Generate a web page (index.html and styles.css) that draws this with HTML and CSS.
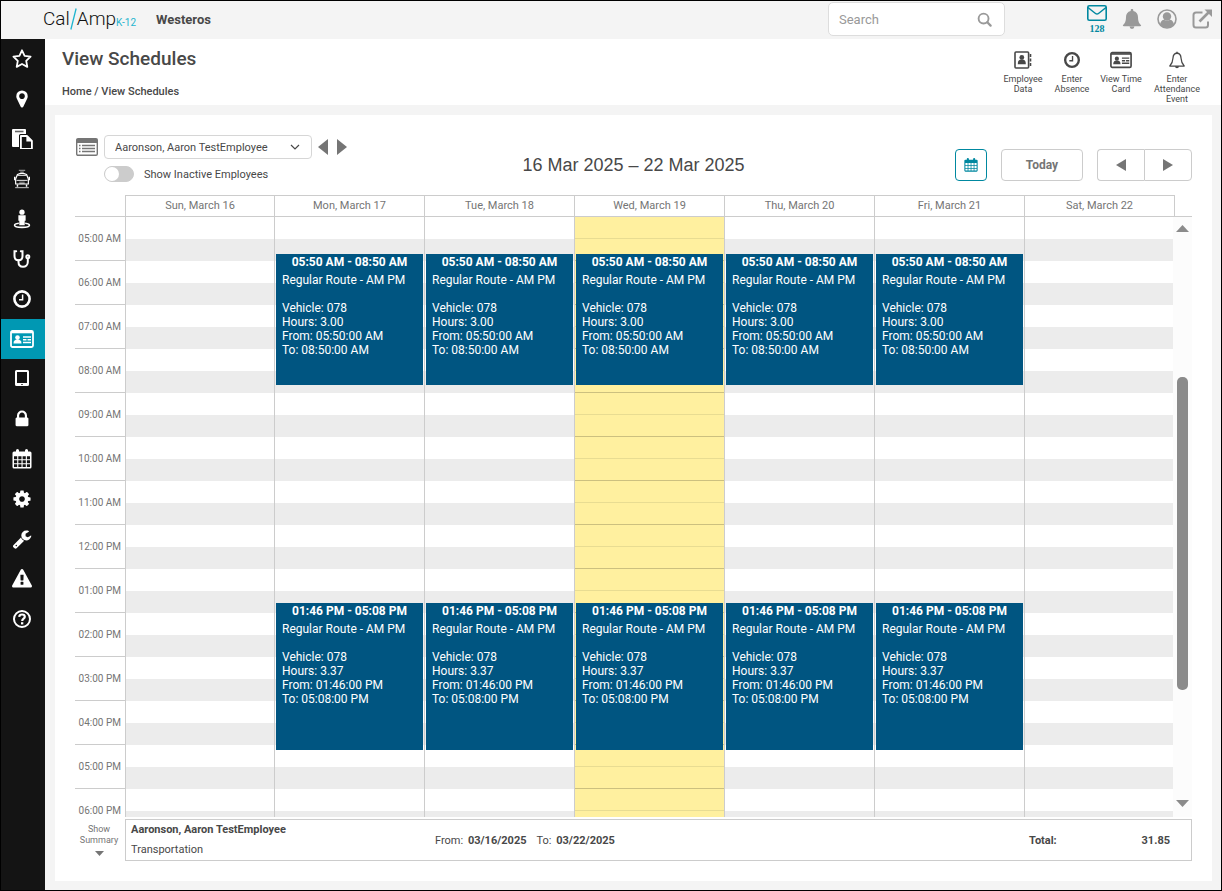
FILE: index.html
```html
<!DOCTYPE html>
<html lang="en">
<head>
    <meta charset="UTF-8">
    <meta name="viewport" content="width=device-width, initial-scale=1.0">
    <title>View Schedules</title>
    <link rel="stylesheet" href="styles.css">
</head>
<body>

    <!-- Icon sprite -->
    <svg class="sprite" aria-hidden="true">
        <symbol id="i-star" viewBox="0 0 20 20"><path d="M10 1.300l2.600 5.600 6 .8-4.400 4.200 1.100 6-5.300-2.900-5.300 2.900 1.100-6-4.400-4.200 6-.8z" fill="none" stroke="currentColor" stroke-width="1.800" stroke-linejoin="round"/></symbol>
        <symbol id="i-marker" viewBox="0 0 1792 1792"><path d="M1152 640q0-106-75-181t-181-75-181 75-75 181 75 181 181 75 181-75 75-181zm256 0q0 109-33 179l-364 774q-16 33-47.500 52t-67.500 19-67.500-19-46.500-52l-365-774q-33-70-33-179 0-212 150-362t362-150 362 150 150 362z"/></symbol>
        <symbol id="i-paste" viewBox="0 0 22 20"><path d="M2 0h12a1 1 0 0 1 1 1v4h-5.500A1.500 1.500 0 0 0 8 6.500V18H2a1 1 0 0 1-1-1V1a1 1 0 0 1 1-1z"/><path d="M4 2.500h8.500" stroke="#666" stroke-width="1.600"/><path d="M9.900 7h6l5 5v8h-11z" fill="#141414" stroke="currentColor" stroke-width="1.800" stroke-linejoin="round"/><path d="M15.400 7v5.500h5.500z"/></symbol>
        <symbol id="i-bus" viewBox="0 0 20 22"><g fill="none" stroke="currentColor"><path d="M6.500 1.500h7M8 3.500h4" stroke-width="1.500" opacity=".5"/><path d="M5 6Q10 3.500 15 6L17 11v5.500H3V11z" stroke-width="1.300"/><path d="M5 7h10M4 12.500h12" stroke-width="1"/><path d="M7 14.500h6M7 16h6" opacity=".6"/><path d="M2 8.500v4M18 8.500v4" stroke-width="1.600"/><path d="M5 17v2.500M15 17v2.500" stroke-width="1.600"/><path d="M2.500 20.500h15" stroke-width="1.200" opacity=".7"/></g></symbol>
        <symbol id="i-person" viewBox="0 0 20 22"><circle cx="10" cy="3.500" r="2.900"/><path d="M6 7h8v6h-1v5H7v-5H6z"/><path d="M6.500 15.600c-3 .4-4.700 1.200-4.700 2.200 0 1.400 3.700 2.400 8.200 2.400s8.200-1 8.200-2.400c0-1-1.700-1.800-4.700-2.200" fill="none" stroke="currentColor" stroke-width="1.700"/></symbol>
        <symbol id="i-steth" viewBox="0 0 20 20"><g fill="none" stroke="currentColor" stroke-width="2" stroke-linecap="round"><path d="M4.200 2.300H2.500V7c0 2.600 1.600 4.300 4 4.300s4-1.700 4-4.300V2.300H8.800"/><path d="M6.500 11.500V13c0 2.800 1.700 4.800 4.500 4.800s4.800-2 4.800-4.800v-3"/><circle cx="15.800" cy="7.700" r="1.500"/></g></symbol>
        <symbol id="i-clock" viewBox="0 0 20 20"><circle cx="10" cy="10" r="7.600" fill="none" stroke="currentColor" stroke-width="2.600"/><path d="M10.600 5.500v5.300H7" fill="none" stroke="currentColor" stroke-width="1.500"/></symbol>
        <symbol id="i-card" viewBox="0 0 24 18"><rect x="1" y="1" width="22" height="16" rx="1.500" fill="none" stroke="currentColor" stroke-width="1.800"/><path d="M1 1.500h22v1.800H1z"/><circle cx="7.500" cy="7.600" r="2.300"/><path d="M3.500 13.500c0-3 1.500-4 4-4s4 1 4 4z"/><path d="M13 7h8M13 9.800h3.500M17.500 9.800H21M13 12.600h8" stroke="currentColor" stroke-width="1.500"/></symbol>
        <symbol id="i-tablet" viewBox="0 0 20 20"><path d="M4.500 1h11A1.500 1.500 0 0 1 17 2.500v13a1.500 1.500 0 0 1-1.500 1.500h-11A1.500 1.500 0 0 1 3 15.500v-13A1.500 1.500 0 0 1 4.500 1zM5 3v11h10V3zm4.300 12v1h1.400v-1z" fill-rule="evenodd"/></symbol>
        <symbol id="i-lock" viewBox="0 0 1792 1792"><path d="M640 768h512v-192q0-106-75-181t-181-75-181 75-75 181v192zm832 96v576q0 40-28 68t-68 28h-960q-40 0-68-28t-28-68v-576q0-40 28-68t68-28h32v-192q0-184 132-316t316-132 316 132 132 316v192h32q40 0 68 28t28 68z"/></symbol>
        <symbol id="i-calendar" viewBox="0 0 20 20"><path d="M2 2.500h16a1.500 1.500 0 0 1 1.500 1.500v14a1.500 1.500 0 0 1-1.500 1.500H2A1.500 1.500 0 0 1 .5 18V4A1.500 1.500 0 0 1 2 2.500zM2 7.300v2.900h3.200V7.300zm4.300 0v2.900h3.200V7.300zm4.300 0v2.900h3.200V7.300zm4.300 0v2.900H18V7.300zM2 11.300v2.900h3.200v-2.900zm4.300 0v2.900h3.200v-2.900zm4.300 0v2.900h3.200v-2.900zm4.300 0v2.900H18v-2.900zM2 15.300v2.700h3.200v-2.700zm4.300 0v2.700h3.200v-2.700zm4.300 0v2.700h3.200v-2.700zm4.300 0v2.700H18v-2.700z" fill-rule="evenodd"/><path d="M5.500 1.500v3M14.500 1.500v3" stroke="currentColor" stroke-width="3" stroke-linecap="round"/></symbol>
        <symbol id="i-cog" viewBox="0 0 1792 1792"><path d="M1152 896q0-106-75-181t-181-75-181 75-75 181 75 181 181 75 181-75 75-181zm512-109v222q0 12-8 23t-20 13l-185 28q-19 54-39 91 35 50 107 138 10 12 10 25t-9 23q-27 37-99 108t-94 71q-12 0-26-9l-138-108q-44 23-91 38-16 136-29 186-7 28-36 28h-222q-14 0-24.500-8.500t-11.500-21.500l-28-184q-49-16-90-37l-141 107q-10 9-25 9-14 0-25-11-126-114-165-168-7-10-7-23 0-12 8-23 15-21 51-66.500t54-70.500q-27-50-41-99l-183-27q-13-2-21-12.500t-8-23.500v-222q0-12 8-23t19-13l186-28q14-46 39-92-40-57-107-138-10-12-10-24 0-10 9-23 26-36 98.500-107.500t94.500-71.500q13 0 26 10l138 107q44-23 91-38 16-136 29-186 7-28 36-28h222q14 0 24.500 8.500t11.500 21.500l28 184q49 16 90 37l142-107q9-9 24-9 13 0 25 10 129 119 165 170 7 8 7 22 0 12-8 23-15 21-51 66.500t-54 70.500q26 50 41 98l183 28q13 2 21 12.500t8 23.500z"/></symbol>
        <symbol id="i-wrench" viewBox="0 0 1792 1792"><path d="M448 1472q0-26-19-45t-45-19-45 19-19 45 19 45 45 19 45-19 19-45zm644-420l-682 682q-37 37-90 37-52 0-91-37l-106-108q-38-36-38-90 0-53 38-91l681-681q39 98 114.500 173.500t173.500 114.500zm634-435q0 39-23 106-47 134-164.500 217.500t-258.500 83.500q-185 0-316.500-131.500t-131.500-316.500 131.500-316.500 316.500-131.500q58 0 121.500 16.500t107.500 46.500q16 11 16 28t-16 28l-293 169v224l193 107q5-3 79-48.500t135.500-81 70.500-35.500q15 0 23.500 10t8.500 25z"/></symbol>
        <symbol id="i-warning" viewBox="0 0 1792 1792"><path d="M1024 1375v-190q0-14-9.500-23.500t-22.500-9.500h-192q-13 0-22.500 9.500t-9.500 23.500v190q0 14 9.500 23.500t22.500 9.500h192q13 0 22.500-9.500t9.500-23.500zm-2-374l18-459q0-12-10-19-13-11-24-11h-220q-11 0-24 11-10 7-10 21l17 457q0 10 10 16.500t24 6.500h185q14 0 23.500-6.500t10.500-16.500zm-14-934l768 1408q35 63-2 126-17 29-46.500 46t-63.500 17h-1536q-34 0-63.500-17t-46.500-46q-37-63-2-126l768-1408q17-31 47-49t65-18 65 18 47 49z"/></symbol>
        <symbol id="i-help" viewBox="0 0 20 20"><circle cx="10" cy="10" r="8" fill="none" stroke="currentColor" stroke-width="2"/><path d="M7.200 7.800C7.400 6.200 8.500 5.500 10 5.500c1.700 0 2.800 1 2.800 2.300 0 2-2.600 1.900-2.600 4.200" fill="none" stroke="currentColor" stroke-width="2.200"/><path d="M9 13.200h2.300v2.200H9z"/></symbol>
        <symbol id="i-search" viewBox="0 0 16 16"><circle cx="7" cy="7" r="5.300" fill="none" stroke="currentColor" stroke-width="2"/><path d="M11 11l3.500 3.500" stroke="currentColor" stroke-width="2.400" stroke-linecap="round"/></symbol>
        <symbol id="i-mail" viewBox="0 0 20 16"><rect x=".8" y=".8" width="18.400" height="14.400" rx="1.500" fill="none" stroke="currentColor" stroke-width="1.600"/><path d="M1 2.500c3 2.500 6 4.800 7.500 6 1 .8 2 .8 3 0 1.500-1.200 4.500-3.500 7.500-6" fill="none" stroke="currentColor" stroke-width="1.500"/></symbol>
        <symbol id="i-bell" viewBox="0 0 20 20"><path d="M10 0c.8 0 1.300.5 1.300 1.300v.6C14.500 2.500 16 5 16 8c0 4.500 1.200 6.500 3 8 .3.700 0 1.200-.8 1.200H1.800c-.8 0-1.100-.5-.8-1.200 1.800-1.500 3-3.500 3-8 0-3 1.500-5.500 4.700-6.100v-.6C8.700.5 9.200 0 10 0zM7.600 17.500h4.800a2.400 2.400 0 0 1-4.800 0z"/></symbol>
        <symbol id="i-bell-o" viewBox="0 0 20 20"><path d="M10 2.500c-2.800 0-4.300 2.200-4.500 5.500-.2 4-1.300 6.300-3.500 8.700h16c-2.200-2.400-3.300-4.700-3.500-8.700-.2-3.300-1.700-5.500-4.500-5.500z" fill="none" stroke="currentColor" stroke-width="1.400" stroke-linejoin="round"/><path d="M9.200.8h1.600v2H9.200zM7.800 17h4.400a2.200 2.200 0 0 1-4.400 0z"/></symbol>
        <symbol id="i-user" viewBox="0 0 20 20"><circle cx="10" cy="10" r="9" fill="none" stroke="currentColor" stroke-width="1.600"/><circle cx="10" cy="7.500" r="4.200"/><path d="M3 15.500c.6-3 2.200-4.600 4-4.700 1.800 1.400 4.200 1.400 6 0 1.800.1 3.400 1.700 4 4.700-1.700 2-4.300 3.300-7 3.300s-5.300-1.300-7-3.300z"/></symbol>
        <symbol id="i-external" viewBox="0 0 20 20"><path d="M10.500 3.500H4A2.500 2.500 0 0 0 1.500 6v10A2.500 2.500 0 0 0 4 18.500h9.500A2.500 2.500 0 0 0 16 16v-3.500" fill="none" stroke="currentColor" stroke-width="2"/><path d="M7.500 12.500l9-9" stroke="currentColor" stroke-width="2.600"/><path d="M12.500.5H20v7.500z"/></symbol>
        <symbol id="i-book" viewBox="0 0 18 18"><rect x="1" y="1" width="13.600" height="16" rx="1" fill="none" stroke="currentColor" stroke-width="1.600"/><circle cx="7.800" cy="6.400" r="2.400"/><path d="M3.800 13.300c0-4 1.500-4.800 4-4.800s4 .8 4 4.800z"/><path d="M16.500 3v3M16.500 7.500v3M16.500 12v3" stroke="currentColor" stroke-width="1.600"/></symbol>
        <symbol id="i-list" viewBox="0 0 22 18"><rect x=".7" y=".7" width="20.600" height="16.600" rx="1.300" fill="none" stroke="currentColor" stroke-width="1.400"/><path d="M1 1h20v4H1z"/><path d="M6 7.500h13M6 10.500h13M6 13.500h13M3 7.500h1.500M3 10.500h1.500M3 13.500h1.500" stroke="currentColor" stroke-width="1.600"/></symbol>
        <symbol id="i-left" viewBox="0 0 10 16" preserveAspectRatio="none"><path d="M10 0v16L0 8z"/></symbol>
        <symbol id="i-right" viewBox="0 0 10 16" preserveAspectRatio="none"><path d="M0 0v16l10-8z"/></symbol>
        <symbol id="i-up" viewBox="0 0 14 7" preserveAspectRatio="none"><path d="M0 7h14L7 0z"/></symbol>
        <symbol id="i-down" viewBox="0 0 14 7" preserveAspectRatio="none"><path d="M0 0h14L7 7z"/></symbol>
        <symbol id="i-chevron" viewBox="0 0 10 6"><path d="M1 1l4 4 4-4" fill="none" stroke="currentColor" stroke-width="1.200"/></symbol>
    </svg>

    <header class="topbar">
        <a class="logo" href="#">
            <span>Cal</span>
            <svg class="slash" viewBox="0 0 8 24" aria-hidden="true"><path d="M7 0L1 24" stroke="#1fb5cf" stroke-width="1.500"/></svg>
            <span>Amp</span>
            <span class="logo-k12">K-12</span>
        </a>
        <span class="district">Westeros</span>
        <form class="search">
            <input type="search" placeholder="Search" aria-label="Search">
            <button type="button" aria-label="Run search"><svg><use href="#i-search"/></svg></button>
        </form>
        <nav class="user-links" aria-label="Account">
            <a class="messages" href="#" aria-label="Messages"><svg><use href="#i-mail"/></svg><span>128</span></a>
            <a href="#" aria-label="Alerts"><svg><use href="#i-bell"/></svg></a>
            <a href="#" aria-label="Profile"><svg><use href="#i-user"/></svg></a>
            <a href="#" aria-label="Open in new window"><svg><use href="#i-external"/></svg></a>
        </nav>
    </header>

    <div class="layout">
        <nav class="sidebar" aria-label="Main">
            <a href="#" aria-label="Favorites"><svg><use href="#i-star"/></svg></a>
            <a href="#" aria-label="Map"><svg><use href="#i-marker"/></svg></a>
            <a href="#" aria-label="Documents"><svg class="wide"><use href="#i-paste"/></svg></a>
            <a href="#" aria-label="Vehicles"><svg><use href="#i-bus"/></svg></a>
            <a href="#" aria-label="Students"><svg><use href="#i-person"/></svg></a>
            <a href="#" aria-label="Diagnostics"><svg><use href="#i-steth"/></svg></a>
            <a href="#" aria-label="Time"><svg><use href="#i-clock"/></svg></a>
            <a href="#" aria-label="Employees" class="active"><svg class="wide"><use href="#i-card"/></svg></a>
            <a href="#" aria-label="Tablets"><svg><use href="#i-tablet"/></svg></a>
            <a href="#" aria-label="Security"><svg><use href="#i-lock"/></svg></a>
            <a href="#" aria-label="Calendar"><svg><use href="#i-calendar"/></svg></a>
            <a href="#" aria-label="Settings"><svg><use href="#i-cog"/></svg></a>
            <a href="#" aria-label="Maintenance"><svg><use href="#i-wrench"/></svg></a>
            <a href="#" aria-label="Warnings"><svg><use href="#i-warning"/></svg></a>
            <a href="#" aria-label="Help"><svg><use href="#i-help"/></svg></a>
        </nav>

        <div class="page">
            <div class="page-header">
                <div>
                    <h1>View Schedules</h1>
                    <div class="breadcrumb"><a href="#">Home</a> / <a href="#">View Schedules</a></div>
                </div>
                <div class="actions">
                    <a href="#"><svg><use href="#i-book"/></svg>Employee Data</a>
                    <a href="#"><svg><use href="#i-clock"/></svg>Enter Absence</a>
                    <a href="#"><svg class="wide"><use href="#i-card"/></svg>View Time Card</a>
                    <a href="#"><svg><use href="#i-bell-o"/></svg>Enter Attendance Event</a>
                </div>
            </div>

            <main class="card">
                <div class="toolbar">
                    <div class="filters">
                        <button type="button" class="list-btn" aria-label="Employee list"><svg><use href="#i-list"/></svg></button>
                        <div class="select-wrap">
                            <select aria-label="Employee">
                                <option>Aaronson, Aaron TestEmployee</option>
                            </select>
                            <svg><use href="#i-chevron"/></svg>
                        </div>
                        <div class="stepper">
                            <button type="button" aria-label="Previous employee"><svg><use href="#i-left"/></svg></button>
                            <button type="button" aria-label="Next employee"><svg><use href="#i-right"/></svg></button>
                        </div>
                        <label class="toggle"><input type="checkbox">Show Inactive Employees</label>
                    </div>
                    <h2>16 Mar 2025 – 22 Mar 2025</h2>
                    <div class="range-nav">
                        <button type="button" class="btn btn-cal" aria-label="Pick a date"><svg><use href="#i-calendar"/></svg></button>
                        <button type="button" class="btn btn-today">Today</button>
                        <div class="btn-group">
                            <button type="button" class="btn" aria-label="Previous week"><svg><use href="#i-left"/></svg></button>
                            <button type="button" class="btn" aria-label="Next week"><svg><use href="#i-right"/></svg></button>
                        </div>
                    </div>
                </div>

                <div class="cal-head">
                    <div class="corner"></div>
                    <div class="day-name">Sun, March 16</div>
                    <div class="day-name">Mon, March 17</div>
                    <div class="day-name">Tue, March 18</div>
                    <div class="day-name">Wed, March 19</div>
                    <div class="day-name">Thu, March 20</div>
                    <div class="day-name">Fri, March 21</div>
                    <div class="day-name">Sat, March 22</div>
                </div>

                <div class="cal-body">
                    <div class="hours">
                        <div>05:00 AM</div>
                        <div>06:00 AM</div>
                        <div>07:00 AM</div>
                        <div>08:00 AM</div>
                        <div>09:00 AM</div>
                        <div>10:00 AM</div>
                        <div>11:00 AM</div>
                        <div>12:00 PM</div>
                        <div>01:00 PM</div>
                        <div>02:00 PM</div>
                        <div>03:00 PM</div>
                        <div>04:00 PM</div>
                        <div>05:00 PM</div>
                        <div>06:00 PM</div>
                    </div>
                    <div class="day"></div>
                    <div class="day">
                        <div class="event am">
                            <h3>05:50 AM - 08:50 AM</h3>
                            <p>Regular Route - AM PM</p>
                            <p>Vehicle: 078<br>Hours: 3.00<br>From: 05:50:00 AM<br>To: 08:50:00 AM</p>
                        </div>
                        <div class="event pm">
                            <h3>01:46 PM - 05:08 PM</h3>
                            <p>Regular Route - AM PM</p>
                            <p>Vehicle: 078<br>Hours: 3.37<br>From: 01:46:00 PM<br>To: 05:08:00 PM</p>
                        </div>
                    </div>
                    <div class="day">
                        <div class="event am">
                            <h3>05:50 AM - 08:50 AM</h3>
                            <p>Regular Route - AM PM</p>
                            <p>Vehicle: 078<br>Hours: 3.00<br>From: 05:50:00 AM<br>To: 08:50:00 AM</p>
                        </div>
                        <div class="event pm">
                            <h3>01:46 PM - 05:08 PM</h3>
                            <p>Regular Route - AM PM</p>
                            <p>Vehicle: 078<br>Hours: 3.37<br>From: 01:46:00 PM<br>To: 05:08:00 PM</p>
                        </div>
                    </div>
                    <div class="day today">
                        <div class="event am">
                            <h3>05:50 AM - 08:50 AM</h3>
                            <p>Regular Route - AM PM</p>
                            <p>Vehicle: 078<br>Hours: 3.00<br>From: 05:50:00 AM<br>To: 08:50:00 AM</p>
                        </div>
                        <div class="event pm">
                            <h3>01:46 PM - 05:08 PM</h3>
                            <p>Regular Route - AM PM</p>
                            <p>Vehicle: 078<br>Hours: 3.37<br>From: 01:46:00 PM<br>To: 05:08:00 PM</p>
                        </div>
                    </div>
                    <div class="day">
                        <div class="event am">
                            <h3>05:50 AM - 08:50 AM</h3>
                            <p>Regular Route - AM PM</p>
                            <p>Vehicle: 078<br>Hours: 3.00<br>From: 05:50:00 AM<br>To: 08:50:00 AM</p>
                        </div>
                        <div class="event pm">
                            <h3>01:46 PM - 05:08 PM</h3>
                            <p>Regular Route - AM PM</p>
                            <p>Vehicle: 078<br>Hours: 3.37<br>From: 01:46:00 PM<br>To: 05:08:00 PM</p>
                        </div>
                    </div>
                    <div class="day">
                        <div class="event am">
                            <h3>05:50 AM - 08:50 AM</h3>
                            <p>Regular Route - AM PM</p>
                            <p>Vehicle: 078<br>Hours: 3.00<br>From: 05:50:00 AM<br>To: 08:50:00 AM</p>
                        </div>
                        <div class="event pm">
                            <h3>01:46 PM - 05:08 PM</h3>
                            <p>Regular Route - AM PM</p>
                            <p>Vehicle: 078<br>Hours: 3.37<br>From: 01:46:00 PM<br>To: 05:08:00 PM</p>
                        </div>
                    </div>
                    <div class="day"></div>
                    <div class="scrollbar">
                        <button type="button" aria-label="Scroll up"><svg><use href="#i-up"/></svg></button>
                        <div class="track"><div class="thumb"></div></div>
                        <button type="button" aria-label="Scroll down"><svg><use href="#i-down"/></svg></button>
                    </div>
                </div>

                <div class="summary">
                    <button type="button" class="show-summary">Show Summary<svg><use href="#i-down"/></svg></button>
                    <div class="summary-box">
                        <div class="employee"><strong>Aaronson, Aaron TestEmployee</strong><span>Transportation</span></div>
                        <div class="dates"><span>From: <strong>03/16/2025</strong></span><span>To: <strong>03/22/2025</strong></span></div>
                        <div class="total"><strong>Total:</strong><strong>31.85</strong></div>
                    </div>
                </div>
            </main>
        </div>
    </div>

</body>
</html>
```
FILE: styles.css
```css
* {
    box-sizing: border-box;
}
body {
    margin: 0;
    height: 100vh;
    border: 1px solid #000;
    display: flex;
    flex-direction: column;
    font-family: Roboto, Arial, sans-serif;
    font-size: 11px;
    color: #484848;
    background: #f4f4f4;
    overflow: hidden;
}
h1, h2, h3, p {
    margin: 0;
}
a {
    color: inherit;
    text-decoration: none;
}
strong {
    font-weight: 700;
}
svg {
    display: block;
    flex: none;
    fill: currentColor;
}
button {
    display: flex;
    align-items: center;
    justify-content: center;
    padding: 0;
    border: none;
    background: none;
    font: inherit;
    color: #757575;
    cursor: pointer;
}
.sprite {
    display: none;
}

/* Top bar */
.topbar {
    flex: none;
    display: flex;
    align-items: center;
    height: 38px;
    padding: 0 9px 2px 42px;
}
.logo {
    display: flex;
    align-items: center;
    font-size: 19px;
    line-height: 24px;
    font-weight: 300;
    color: #111;
}
.slash {
    width: 7px;
    height: 24px;
}
.logo-k12 {
    align-self: flex-end;
    line-height: 16px;
    font-size: 10px;
    font-weight: 400;
    color: #1fb5cf;
}
.district {
    margin-left: 20px;
    font-size: 13px;
    font-weight: 700;
}
.search {
    display: flex;
    align-items: center;
    width: 177px;
    height: 34px;
    margin: 0 82px 0 auto;
    padding: 0 12px 0 10px;
    border: 1px solid #ddd;
    border-radius: 5px;
    background: #fff;
}
.search input {
    flex: 1;
    min-width: 0;
    padding: 0;
    border: none;
    outline: none;
    background: none;
    font: 13px Roboto, Arial, sans-serif;
    color: #484848;
}
.search input::placeholder {
    color: #999;
}
.search svg {
    width: 15px;
    height: 15px;
    color: #999;
}
.user-links {
    display: flex;
    align-items: center;
    gap: 15px;
    color: #999;
}
.user-links svg {
    width: 20px;
    height: 20px;
}
.user-links .messages {
    font: bold 10px/11px "Liberation Serif", serif;
    text-align: center;
    color: #0088a0;
}
.user-links .messages svg {
    height: 16px;
    margin-bottom: 2px;
}

/* Sidebar */
.layout {
    flex: 1;
    min-height: 0;
    display: flex;
}
.sidebar {
    flex: none;
    width: 44px;
    background: #141414;
    color: #fff;
}
.sidebar a {
    display: flex;
    align-items: center;
    justify-content: center;
    height: 40px;
    padding-right: 2px;
}
.sidebar a.active {
    background: #0098b3;
}
.sidebar svg {
    width: 20px;
    height: 20px;
}
.sidebar svg.wide {
    width: 24px;
}

/* Page header */
.page {
    flex: 1;
    min-width: 0;
    display: flex;
    flex-direction: column;
}
.page-header {
    flex: none;
    display: flex;
    justify-content: space-between;
    height: 66px;
    padding: 8px 15px 0 17px;
    background: #fff;
}
.page-header h1 {
    font-size: 19px;
    line-height: 24px;
    font-weight: 500;
}
.breadcrumb {
    margin-top: 13px;
    line-height: 16px;
    font-weight: 500;
}
.actions {
    display: flex;
    gap: 5px;
    padding-top: 4px;
}
.actions a {
    display: flex;
    flex-direction: column;
    align-items: center;
    width: 44px;
    font-size: 9px;
    line-height: 10px;
    text-align: center;
}
.actions a:last-child {
    width: 58px;
    padding: 0 5px;
}
.actions svg {
    width: 18px;
    height: 18px;
    margin-bottom: 5px;
}
.actions svg.wide {
    width: 22px;
}

/* Schedule card */
.card {
    flex: 1;
    min-height: 0;
    display: flex;
    flex-direction: column;
    margin: 10px 9px 9px 10px;
    padding: 20px;
    background: #fff;
}
.toolbar {
    flex: none;
    display: grid;
    grid-template-columns: 1fr auto 1fr;
    align-items: center;
    height: 60px;
}
.toolbar h2 {
    font-family: "Liberation Sans", Arial, sans-serif;
    font-size: 18px;
    line-height: 20px;
    font-weight: 400;
}
.filters {
    align-self: start;
    display: grid;
    grid-template-columns: 23px 208px auto;
    gap: 7px 6px;
    justify-content: start;
    align-items: center;
}
.list-btn {
    justify-content: flex-end;
}
.list-btn svg {
    width: 22px;
    height: 18px;
}
.select-wrap {
    display: grid;
    align-items: center;
}
.select-wrap select,
.select-wrap svg {
    grid-area: 1 / 1;
}
.select-wrap select {
    height: 24px;
    padding: 0 10px;
    border: 1px solid #d6d6d6;
    border-radius: 4px;
    background: #fff;
    font: 11px Roboto, Arial, sans-serif;
    color: #484848;
    appearance: none;
}
.select-wrap svg {
    justify-self: end;
    width: 10px;
    height: 6px;
    margin-right: 12px;
    pointer-events: none;
}
.stepper {
    display: flex;
    gap: 9px;
}
.stepper svg {
    width: 10px;
    height: 16px;
}
.toggle {
    grid-column: 2;
    display: flex;
    align-items: center;
    gap: 10px;
}
.toggle input {
    width: 30px;
    height: 16px;
    margin: 0;
    border: 1px solid #ccc;
    border-radius: 8px;
    background: #ccc;
    appearance: none;
}
.toggle input::before {
    content: "";
    display: block;
    width: 14px;
    height: 14px;
    border-radius: 50%;
    background: #fff;
}
.toggle input:checked::before {
    margin-left: 14px;
}
.range-nav {
    display: flex;
    justify-content: flex-end;
    gap: 14px;
}
.btn {
    height: 32px;
    border: 1px solid #ccc;
    border-radius: 4px;
    background: #fff;
    font-weight: 700;
}
.btn-cal {
    width: 32px;
    border-color: #0088a0;
    color: #0088a0;
}
.btn-cal svg {
    width: 14px;
    height: 14px;
}
.btn-today {
    width: 82px;
    font-size: 12px;
}
.btn-group {
    display: flex;
}
.btn-group .btn {
    width: 48px;
}
.btn-group .btn:first-child {
    width: 47px;
    border-right: none;
    border-radius: 4px 0 0 4px;
}
.btn-group .btn:last-child {
    border-radius: 0 4px 4px 0;
}
.btn-group svg {
    width: 10px;
    height: 12px;
}

/* Calendar */
.cal-head,
.cal-body {
    display: grid;
    grid-template-columns: 50px repeat(7, 1fr) 17px;
}
.cal-head {
    flex: none;
    height: 22px;
    border-bottom: 1px solid #ccc;
    line-height: 20px;
    text-align: center;
    color: #757575;
}
.day-name {
    border-top: 1px solid #ccc;
    border-right: 1px solid #ccc;
}
.corner + .day-name {
    border-left: 1px solid #ccc;
}
.cal-body {
    flex: 1;
    min-height: 0;
    grid-template-rows: 100%;
    overflow: hidden;
}
.hours div {
    height: 44px;
    border-bottom: 1px solid #ccc;
    line-height: 44px;
    padding-right: 4px;
    text-align: right;
    font-size: 10px;
    color: #757575;
}
.day {
    position: relative;
    border-right: 1px solid #ccc;
    background: repeating-linear-gradient(#fff 0 22px, #ececec 22px 44px);
}
.hours + .day {
    border-left: 1px solid #ccc;
}
.day.today {
    background: repeating-linear-gradient(#fff09f 0 21px, #e8dc92 21px 22px, #fff09f 22px 43px, #ccc07f 43px 44px);
}
/* Events sit over the day's hour stripes */
.event {
    position: absolute;
    left: 1px;
    right: 1px;
    padding: 0 6px;
    background: #005581;
    color: #fff;
    font-size: 12px;
    line-height: 14px;
}
.event.am {
    top: 37px;
    height: 131px;
}
.event.pm {
    top: 386px;
    height: 147px;
}
.event h3 {
    font-size: 12px;
    line-height: 16px;
    font-weight: 700;
    text-align: center;
}
.event p {
    margin-bottom: 14px;
}
.event h3 + p {
    margin-top: 3px;
}
.scrollbar {
    position: relative;
    display: flex;
    flex-direction: column;
    margin-left: -2px;
    background: #fcfcfc;
}
.scrollbar button {
    height: 20px;
    color: #8b8b8b;
}
.scrollbar button:first-child {
    padding-top: 3px;
}
.scrollbar button:last-child {
    padding-bottom: 7px;
}
.scrollbar svg {
    width: 13px;
    height: 7px;
}
.track {
    flex: 1;
    display: grid;
    grid-template-rows: 140fr 313fr 107fr;
    justify-content: center;
}
.thumb {
    grid-row: 2;
    width: 11px;
    border-radius: 5px;
    background: #8b8b8b;
}

/* Summary */
.summary {
    flex: none;
    display: grid;
    grid-template-columns: 50px 1fr;
    height: 42px;
    margin-top: 2px;
}
.show-summary {
    flex-direction: column;
    justify-content: flex-start;
    padding: 5px 2px 0 0;
    font-size: 9px;
    line-height: 11px;
}
.show-summary svg {
    width: 9px;
    height: 5px;
    margin-top: 5px;
}
.summary-box {
    display: grid;
    grid-template-columns: 304fr 594fr 141fr;
    align-items: center;
    padding: 0 21px 0 5px;
    border: 1px solid #ccc;
}
.employee {
    display: flex;
    flex-direction: column;
    line-height: 20px;
}
.dates {
    display: flex;
    gap: 10px;
}
.dates strong {
    margin-left: 2px;
}
.total {
    display: flex;
    justify-content: space-between;
}
```
